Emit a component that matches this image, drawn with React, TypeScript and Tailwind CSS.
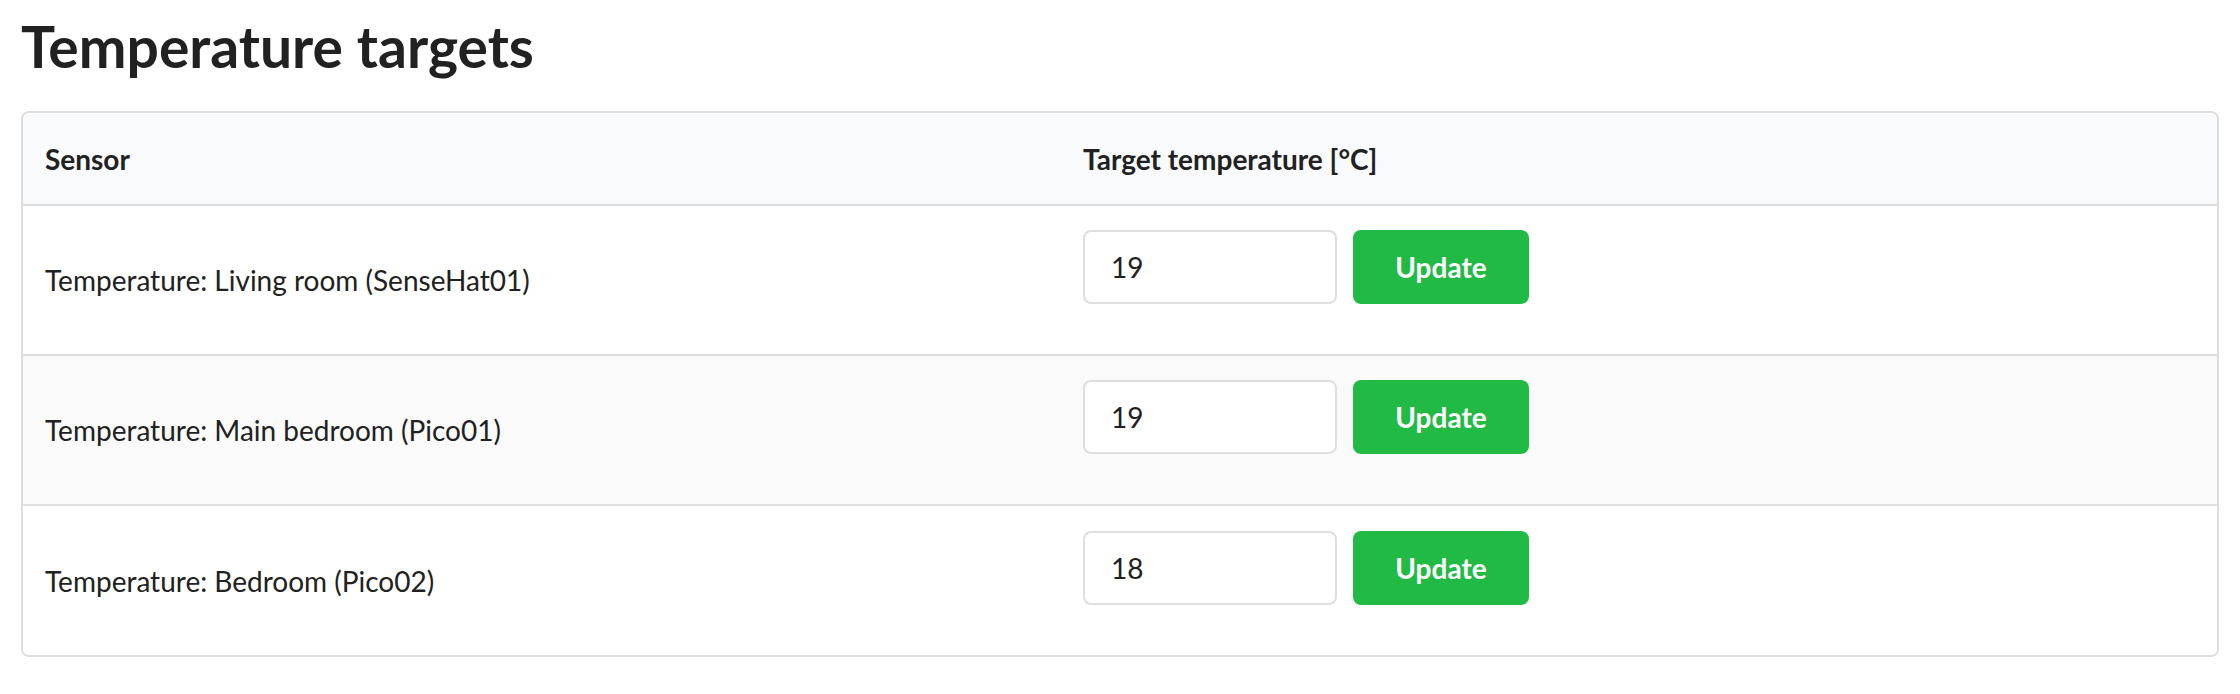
import React from "react";

const rows = [
  { name: "Temperature: Living room (SenseHat01)", value: "19" },
  { name: "Temperature: Main bedroom (Pico01)", value: "19" },
  { name: "Temperature: Bedroom (Pico02)", value: "18" },
];

export default function App() {
  return (
    <div
      className="min-h-[694px] bg-white px-[21px] pt-[10px] text-[28px] text-[#212121]"
      style={{ fontFamily: "Lato, 'Noto Sans', sans-serif" }}
    >
      <h1 className="m-0 text-[57px] font-bold leading-[72px] text-[#212121]">
        Temperature targets
      </h1>
      <div className="mt-[29px] overflow-hidden rounded-[8px] border-2 border-[#dedede] bg-white">
        <div className="grid h-[93px] grid-cols-[1038px_1fr] border-b-2 border-[#dedede] bg-[#f9fafb] font-bold">
          <div className="flex items-center pl-[22px]">Sensor</div>
          <div className="flex items-center pl-[22px]">Target temperature [°C]</div>
        </div>
        {rows.map((r, i) => (
          <div
            key={r.name}
            className={
              "grid grid-cols-[1038px_1fr] " +
              (i < rows.length - 1 ? "h-[150px] border-b-2 border-[#dedede] " : "h-[149px] ") +
              (i % 2 === 1 ? "bg-[#fafafb]" : "bg-white")
            }
          >
            <div className="flex items-center pl-[22px]">{r.name}</div>
            <div className="flex items-center gap-[16px] pb-[26px] pl-[22px]">
              <input
                type="text"
                defaultValue={r.value}
                className="h-[74px] w-[254px] rounded-[8px] border-2 border-[#dedede] bg-white px-[26px] text-[28px] text-[#212121] outline-none"
                style={{ fontFamily: "Lato, 'Noto Sans', sans-serif" }}
              />
              <button
                className="h-[74px] w-[176px] rounded-[8px] bg-[#21ba45] text-[28px] font-bold text-white"
                style={{ fontFamily: "Lato, 'Noto Sans', sans-serif" }}
              >
                Update
              </button>
            </div>
          </div>
        ))}
      </div>
    </div>
  );
}
